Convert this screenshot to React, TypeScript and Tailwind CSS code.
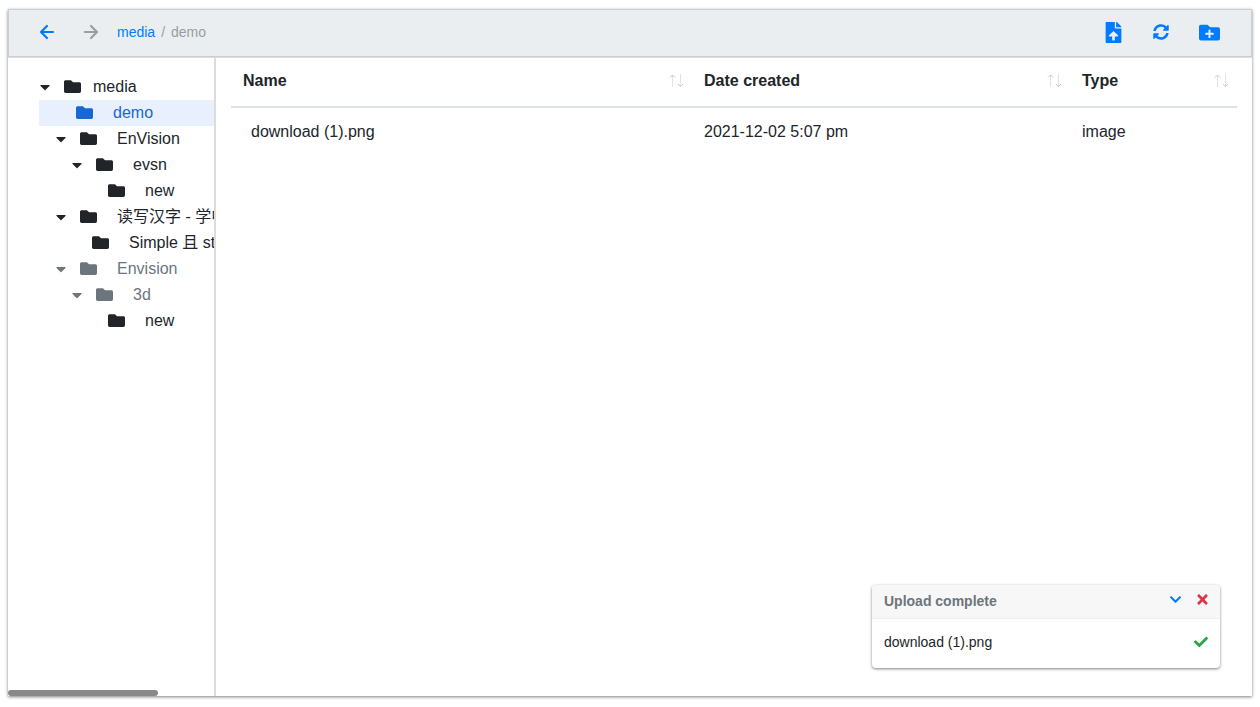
import {
  FaCaretDown,
  FaCheck,
  FaChevronDown,
  FaFileUpload,
  FaFolder,
  FaFolderPlus,
  FaSyncAlt,
  FaTimes,
} from "react-icons/fa";

const folders = [
  { id: 1, name: "media", depth: 0, open: true },
  { id: 2, name: "demo", depth: 1, selected: true },
  { id: 3, name: "EnVision", depth: 1, open: true },
  { id: 4, name: "evsn", depth: 2, open: true },
  { id: 5, name: "new", depth: 3 },
  { id: 6, name: "读写汉字 - 学中文", depth: 1, open: true },
  { id: 7, name: "Simple 且 st", depth: 2 },
  { id: 8, name: "Envision", depth: 1, open: true, muted: true },
  { id: 9, name: "3d", depth: 2, open: true, muted: true },
  { id: 10, name: "new", depth: 3 },
];

const files = [
  { name: "download (1).png", created: "2021-12-02 5:07 pm", type: "image" },
];

const columns = [
  { label: "Name", width: "" },
  { label: "Date created", width: "w-[378px]" },
  { label: "Type", width: "w-[167px]" },
];

const indent = ["pl-0", "pl-4", "pl-8", "pl-12"];

function ArrowIcon({ d }: { d: string }) {
  return (
    <svg
      width="16"
      height="16"
      viewBox="0 0 16 16"
      fill="none"
      stroke="currentColor"
      strokeWidth="2.2"
      strokeLinecap="round"
      strokeLinejoin="round"
      aria-hidden="true"
    >
      <path d={d} />
    </svg>
  );
}

function SortArrows() {
  return (
    <svg width="16" height="14" viewBox="0 0 16 14" fill="none" aria-hidden="true">
      <path d="M4.5 1v12M12.5 0v12" stroke="#e2e2e2" />
      <path d="M2 3.5l2.5-2.5 2.5 2.5M10 10l2.5 2.5 2.5-2.5" stroke="#c4c4c4" />
    </svg>
  );
}

function Toolbar() {
  return (
    <header className="flex h-12 items-center justify-between border border-[#cccfd2] bg-[#eaeef1] px-[30px] pb-[2px]">
      <div className="flex items-center">
        <button type="button" aria-label="Back" className="text-[#007bff]">
          <ArrowIcon d="M14 8H2.5M8 2L2 8l6 6" />
        </button>
        <button type="button" aria-label="Forward" disabled className="ml-7 text-[#999da0]">
          <ArrowIcon d="M2 8h11.5M8 2l6 6-6 6" />
        </button>
        <nav aria-label="Breadcrumb" className="ml-[18px] flex gap-[6px] text-sm text-[#999da0]">
          <a href="#media" className="text-[#007bff]">media</a>
          <span>/</span>
          <span>demo</span>
        </nav>
      </div>
      <div className="flex gap-6 text-[#007bff]">
        <button type="button" aria-label="Upload file" className="flex size-6 items-center justify-center">
          <FaFileUpload size={21} />
        </button>
        <button type="button" aria-label="Refresh" className="flex size-6 items-center justify-center">
          <FaSyncAlt size={16} />
        </button>
        <button type="button" aria-label="New folder" className="flex size-6 items-center justify-center">
          <FaFolderPlus size={21} />
        </button>
      </div>
    </header>
  );
}

function FolderTree() {
  return (
    <aside className="flex w-52 shrink-0 flex-col justify-between overflow-hidden border-r-2 border-[#dcdcdc]">
      <ul className="pt-4 pl-[31px]">
        {folders.map((folder) => (
          <li
            key={folder.id}
            className={`flex h-[26px] items-center whitespace-nowrap ${indent[folder.depth]} ${
              folder.selected ? "bg-[#e8f0fe] text-[#1967d2]" : folder.muted ? "text-[#6c757d]" : ""
            }`}
          >
            {folder.open ? (
              <button type="button" aria-label={`Collapse ${folder.name}`} className="w-[25px] shrink-0 pr-[13px]">
                <FaCaretDown size={16} className="-mx-[2px]" />
              </button>
            ) : (
              <span className="w-[21px] shrink-0" />
            )}
            <FaFolder size={17} className="mb-[2px] shrink-0" />
            <a href={`#folder-${folder.id}`} className={folder.depth === 0 ? "ml-3" : "ml-5"}>
              {folder.name}
            </a>
          </li>
        ))}
      </ul>
      <div className="h-[6px] w-[150px] rounded-full bg-[#888]" />
    </aside>
  );
}

function FileTable() {
  return (
    <main className="min-w-0 flex-1 px-[15px]">
      <table className="w-full table-fixed text-left">
        <thead>
          <tr className="border-b-2 border-[#dee2e6]">
            {columns.map((column) => (
              <th key={column.label} className={`h-[49px] pr-2 pb-[2px] pl-3 font-bold ${column.width}`}>
                <div className="flex items-center justify-between">
                  {column.label}
                  <SortArrows />
                </div>
              </th>
            ))}
          </tr>
        </thead>
        <tbody>
          {files.map((file) => (
            <tr key={file.name} className="h-12">
              <td className="pl-5">{file.name}</td>
              <td className="pl-3">{file.created}</td>
              <td className="pl-3">{file.type}</td>
            </tr>
          ))}
        </tbody>
      </table>
    </main>
  );
}

function UploadStatus() {
  return (
    <section className="absolute right-8 bottom-7 w-[348px] overflow-hidden rounded bg-white text-sm shadow-[0_1px_3px_rgba(0,0,0,0.5)]">
      <div className="flex h-[34px] items-center justify-between border-b border-[#efefef] bg-[#f7f7f7] pr-[10px] pb-[2px] pl-3">
        <h2 className="font-bold text-[#6c757d]">Upload complete</h2>
        <div className="flex items-center gap-[13px] pb-[2px]">
          <button type="button" aria-label="Collapse" className="text-[#007bff]">
            <FaChevronDown size={13} />
          </button>
          <button type="button" aria-label="Close" className="text-[#dc3545]">
            <FaTimes size={15} />
          </button>
        </div>
      </div>
      <div className="flex h-[49px] items-center justify-between px-3 pb-1">
        <span>download (1).png</span>
        <FaCheck size={14} className="text-[#28a745]" />
      </div>
    </section>
  );
}

export default function App() {
  return (
    <div className="flex min-h-screen flex-col bg-white px-2 pt-[9px] pb-[11px] font-['Liberation_Sans','Noto_Sans_CJK_SC',sans-serif] text-base text-[#212529]">
      <div className="relative flex flex-1 flex-col shadow-[0_1px_3px_rgba(0,0,0,0.5)]">
        <Toolbar />
        <div className="flex flex-1 border-t border-[#dcdcdc]">
          <FolderTree />
          <FileTable />
        </div>
        <UploadStatus />
      </div>
    </div>
  );
}
